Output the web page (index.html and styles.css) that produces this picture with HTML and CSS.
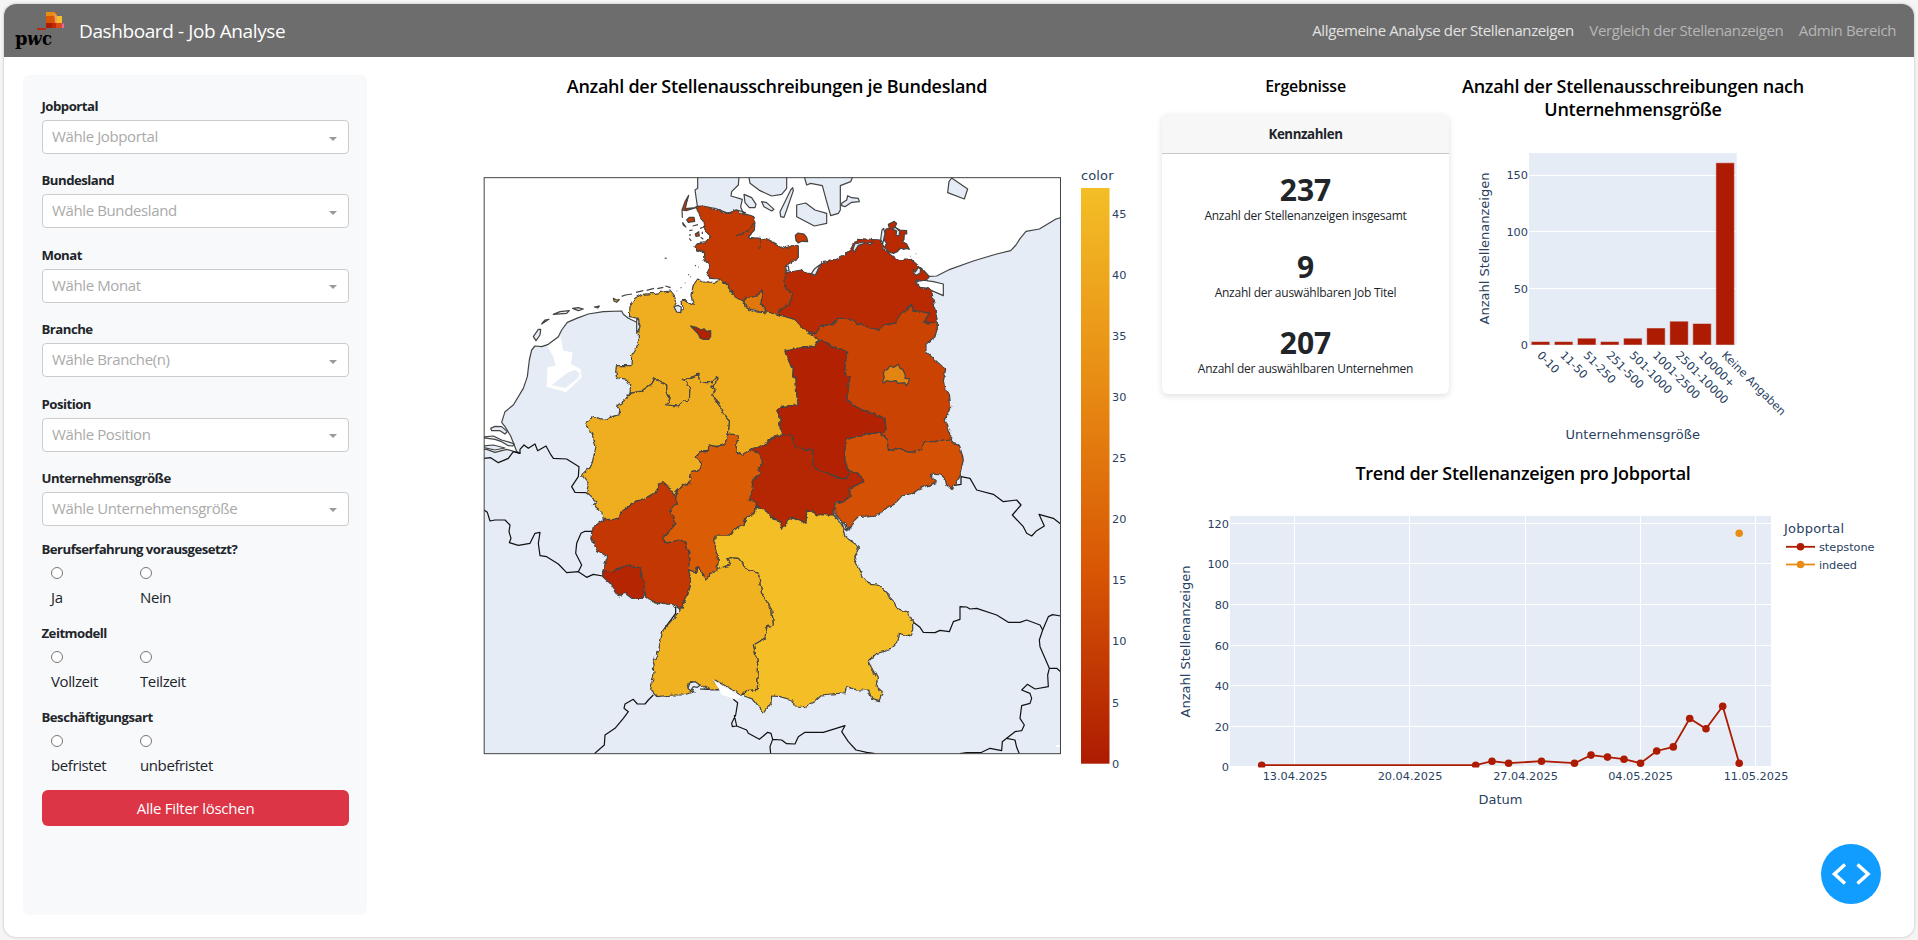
FILE: index.html
```html
<!DOCTYPE html>
<html lang="de">
<head>
<meta charset="utf-8">
<title>Dashboard - Job Analyse</title>
<link rel="stylesheet" href="styles.css">
</head>
<body>
<div class="app">
  <header class="navbar">
    <div class="brand">
      <svg class="logo" viewBox="12 8 56 46">
        <rect x="46" y="12" width="10" height="16" fill="#d85604"/>
        <path d="M46 12h8l3 3v1h-11z" fill="#e88d14"/>
        <path d="M54 13l3 3v7h-2z" fill="#eb9a6a"/>
        <rect x="57" y="16" width="5" height="8" fill="#f3be26"/>
        <rect x="46" y="23" width="10" height="5" fill="#ad1b02"/>
        <rect x="52" y="23" width="4" height="5" fill="#c52a05"/>
        <rect x="56" y="23" width="6" height="5" fill="#dc4a1c"/>
        <rect x="62" y="23.500" width="2" height="4.500" fill="#e669a2"/>
        <rect x="37" y="28" width="9" height="2" fill="#b82a14"/>
        <text class="logo-text" x="15" y="45" textLength="12.500" lengthAdjust="spacingAndGlyphs">p</text>
        <text class="logo-text logo-italic" x="27" y="45" textLength="14.500" lengthAdjust="spacingAndGlyphs">w</text>
        <text class="logo-text" x="42" y="45" textLength="10" lengthAdjust="spacingAndGlyphs">c</text>
      </svg>
      <span class="brand-name">Dashboard - Job Analyse</span>
    </div>
    <nav class="nav">
      <a class="nav-link active">Allgemeine Analyse der Stellenanzeigen</a>
      <a class="nav-link">Vergleich der Stellenanzeigen</a>
      <a class="nav-link">Admin Bereich</a>
    </nav>
  </header>
  <main class="main">
    <aside class="sidebar">
      <div class="field"><label class="label">Jobportal</label><div class="select"><span>Wähle Jobportal</span><i class="arrow"></i></div></div>
      <div class="field"><label class="label">Bundesland</label><div class="select"><span>Wähle Bundesland</span><i class="arrow"></i></div></div>
      <div class="field"><label class="label">Monat</label><div class="select"><span>Wähle Monat</span><i class="arrow"></i></div></div>
      <div class="field"><label class="label">Branche</label><div class="select"><span>Wähle Branche(n)</span><i class="arrow"></i></div></div>
      <div class="field"><label class="label">Position</label><div class="select"><span>Wähle Position</span><i class="arrow"></i></div></div>
      <div class="field"><label class="label">Unternehmensgröße</label><div class="select"><span>Wähle Unternehmensgröße</span><i class="arrow"></i></div></div>
      <div class="choice"><div class="label">Berufserfahrung vorausgesetzt?</div><div class="options"><label class="option"><i class="radio"></i>Ja</label><label class="option"><i class="radio"></i>Nein</label></div></div>
      <div class="choice"><div class="label">Zeitmodell</div><div class="options"><label class="option"><i class="radio"></i>Vollzeit</label><label class="option"><i class="radio"></i>Teilzeit</label></div></div>
      <div class="choice"><div class="label">Beschäftigungsart</div><div class="options"><label class="option"><i class="radio"></i>befristet</label><label class="option"><i class="radio"></i>unbefristet</label></div></div>
      <button class="reset">Alle Filter löschen</button>
    </aside>

    <section class="map-panel">
      <h2 class="title">Anzahl der Stellenausschreibungen je Bundesland</h2>
      <div class="map-row">
        <svg class="map" viewBox="0 0 1800 1860">
          <defs>
            <clipPath id="frame"><rect x="42" y="52" width="1730" height="1729"/></clipPath>
            <filter id="rough" filterUnits="userSpaceOnUse" x="0" y="0" width="1800" height="1860" color-interpolation-filters="sRGB">
              <feTurbulence type="fractalNoise" baseFrequency="0.065" numOctaves="2" seed="4" result="n"/>
              <feDisplacementMap in="SourceGraphic" in2="n" scale="13" xChannelSelector="R" yChannelSelector="G"/>
            </filter>
          </defs>
          <g clip-path="url(#frame)">
            <g class="land">
              <path d="M30 868L50 868 75 877 110 868 150 880 140 874 122 828 105 800 95 787 105 755 130 735 160 685 172 650 178 600 185 570 195 558 215 560 235 553 265 530 275 510 292 487 320 475 355 462 400 455 455 453 460 463 475 475 500 487 640 620 1200 450 1376 349 1400 348 1440 328 1510 303 1580 282 1622 272 1638 255 1650 236 1668 214 1708 207 1758 177 1790 168V1800H30z"/>
              <path d="M30 832L70 828 95 840 120 847 133 852 128 858 115 857 95 845 75 838zM30 860L75 870 105 864 70 855 40 858zM62 805L75 799 95 800 112 815 105 822 90 812 65 812z"/>
              <path d="M683 40V85L675 90 682 138 735 145 775 160 800 150 818 155 812 140 817 118 783 108 785 95 805 75 808 40z"/>
              <path d="M835 40L840 70 870 92 905 108 935 103 950 85V40z"/>
              <path d="M822 103L845 113 858 133 855 143 838 143 825 128zM875 125L890 128 912 148 905 153 882 140zM968 83L970 92 950 150 942 172 932 170 930 155 945 125 962 90z"/>
              <path d="M980 135L1007 129 1035 150 1070 160V190L1033 198 980 170zM1000 40L1010 75 1022 70 1057 77 1070 125 1082 167 1105 160 1111 150V77L1142 65 1152 40z"/>
              <path d="M1115 130L1130 120 1133 107 1145 113 1165 115 1168 125 1145 127 1125 140 1115 137zM1445 54L1493 87 1483 117 1433 98 1437 65z"/>
              <path d="M190 530L205 508 212 508 210 525 198 542zM215 492L225 480 237 478zM250 463L270 455 298 452 290 460zM308 445L325 443 340 447 325 452zM373 441L388 438 383 444z"/>
              <path class="water" d="M1335 368L1355 360 1390 365 1420 372V407L1385 392 1375 385 1350 382z"/>
            </g>
            <path class="lake" d="M232 558L272 530 280 572 308 577 303 612 332 627 335 652 288 697 230 680 232 622 257 617 250 590z"/>
            <path class="polder" d="M245 676L290 640 315 629 329 640 327 652 287 684z"/>
            <g class="border">
              <path d="M42 895L62 893 85 908 115 895 130 875 150 880 150 868 162 855 175 865 195 852 203 872 228 858 240 880 250 895 290 897 327 920 325 950 305 980 315 997 350 998"/>
              <path d="M42 1050L52 1057 60 1083 75 1080 105 1080 120 1095 117 1115 123 1135 118 1148 145 1156 180 1150 195 1120 210 1117 205 1150 210 1187 230 1190 265 1212 290 1238 325 1235 350 1252 370 1243 398 1248"/>
              <path d="M325 1235L335 1215 317 1180 320 1150 333 1120 345 1114 368 1114"/>
              <path d="M550 1605L535 1620 525 1632 502 1632 490 1618 465 1632 462 1645 475 1655 460 1675 435 1705 405 1725 403 1755 373 1781M617 1340V1360L580 1410"/>
              <path d="M690 1587L750 1590M790 1618L803 1628 797 1665 785 1690 787 1700 800 1698 793 1665M800 1698L830 1710 835 1720 868 1738 893 1717 903 1720 908 1738 900 1760 902 1781M908 1738L935 1740 950 1751 975 1752 985 1730 1005 1717 1060 1717 1125 1697 1115 1715 1135 1745 1158 1770 1190 1777 1215 1781"/>
              <path d="M1470 1781L1490 1778 1535 1777 1560 1765 1595 1772 1597 1745 1610 1735 1635 1715 1655 1712 1663 1695 1650 1675 1655 1637 1680 1630 1685 1615 1680 1600 1655 1590 1672 1573 1695 1587 1735 1580 1733 1545 1738 1525 1710 1460 1708 1440 1718 1410 1710 1395 1670 1380 1650 1387 1615 1387 1580 1365 1520 1345 1500 1347 1490 1341 1470 1340 1470 1378 1450 1385 1438 1415 1410 1411 1395 1418 1360 1417 1350 1402 1328 1385"/>
              <path d="M1718 1410L1735 1370 1748 1364 1772 1368M1738 1525L1760 1525 1772 1535M1610 1735L1635 1740 1640 1762 1648 1781"/>
              <path d="M1452 976L1473 973V950L1500 955 1520 990 1570 1003 1600 1025 1640 1020 1653 1035 1627 1065 1660 1100 1670 1120 1685 1128 1700 1112 1723 1098 1707 1063 1750 1075 1772 1092"/>
            </g>
            <g class="states" filter="url(#rough)">
              <path fill="#efad20" d="M478 470L480 440 495 415 515 403 555 400 600 393 612 408 620 425 612 440 625 456 640 445 632 425 645 418 655 428 670 436 663 405 670 375 683 357 700 366 735 367 755 360 775 378 790 405 822 425 825 440 850 455 885 458 895 455 930 465 975 478 995 500 1015 520 1045 537 1035 560 990 565 945 573 950 590 970 625 968 650 978 655 980 700 985 735 930 740 920 750 930 770 930 800 935 825 900 835 895 845 865 862 842 868 835 880 815 885 797 875 800 850 805 825 775 822 778 780 760 760 745 730 725 705 735 690 722 680 740 665 740 650 722 668 690 668 685 643 660 655 640 658 652 672 660 685 658 720 640 725 625 738 590 735 600 715 590 690 590 675 555 655 545 672 515 693 480 700 482 675 470 658 440 652 437 635 440 617 483 617 485 585 505 555 505 520 510 495 505 475z"/>
              <path fill="#efad20" d="M480 700L515 693 545 672 555 655 590 675 590 690 600 715 590 735 625 738 640 725 658 720 660 685 652 672 640 658 660 655 685 643 690 668 722 668 740 650 740 665 722 680 735 690 725 705 745 730 760 760 778 780 775 822 765 850 740 860 717 855 715 875 690 875 675 890 695 910 690 930 665 935 660 968 640 975 617 1000 615 1010 600 990 575 962 555 1000 520 1020 500 1022 455 1055 445 1078 400 1078 395 1055 370 1035 380 1025 350 1000 355 970 335 945 365 915 378 860 365 820 345 790 370 770 400 778 445 765 450 750 440 738 465 720z"/>
              <path fill="#c43a02" d="M678 140L700 138 735 148 775 160 800 150 820 160 847 168 855 185 853 210 835 232 870 235 895 240 940 265 975 255 985 258 985 295 950 315 945 330 965 345 945 360 948 385 968 400 962 430 930 450 930 465 895 457 885 450 872 430 878 392 862 405 830 412 820 425 795 410 780 385 765 365 745 357 722 355 710 335 718 320 705 300 703 278 680 270 675 260 685 248 710 245 722 232 705 215 703 190 688 165z"/>
              <path fill="none" d="M853 190L835 212 798 228M870 264L872 238"/>
              <path fill="#b92902" d="M945 340L965 335 995 330 1025 345 1035 345 1055 308 1095 300 1115 290 1140 270 1162 235 1230 240 1240 265 1280 300 1325 300 1360 330 1378 350 1370 360 1335 365 1350 382 1375 387 1385 392 1392 430 1402 485 1370 490 1362 485 1378 460 1330 450 1325 435 1295 460 1275 490 1240 495 1225 510 1160 490 1130 475 1105 475 1095 490 1050 500 1038 520 1015 520 995 500 975 478 930 465 930 450 962 430 968 400 948 385 945 360z"/>
              <path fill="#ca4303" d="M1015 520L1038 520 1050 500 1095 490 1105 475 1130 475 1160 490 1225 510 1240 495 1275 490 1295 460 1325 435 1330 450 1378 460 1362 485 1370 490 1402 485 1402 505 1395 530 1368 552 1368 575 1395 600 1427 628 1420 660 1425 690 1438 700 1442 740 1425 780 1442 820 1442 837 1395 845 1365 845 1355 868 1320 877 1275 865 1255 872 1250 835 1230 822 1248 810 1245 775 1210 760 1160 745 1130 715 1140 650 1123 640 1130 575 1090 560 1045 537z"/>
              <path fill="#b22102" d="M945 573L990 563 1030 563 1050 537 1090 560 1130 575 1123 640 1140 650 1130 715 1160 745 1210 760 1245 775 1248 810 1230 822 1195 820 1170 828 1130 838 1125 870 1125 900 1135 932 1130 958 1110 955 1060 935 1035 925 1027 910 1033 890 1025 870 975 865 965 825 935 825 930 800 930 770 920 750 930 740 985 735 980 700 978 655 968 650 970 625 950 590z"/>
              <path fill="#b52602" d="M935 825L965 825 975 865 1025 870 1033 890 1027 910 1035 925 1060 935 1110 955 1130 958 1135 932 1165 940 1182 965 1140 985 1140 1010 1120 1025 1095 1030 1090 1065 1040 1065 1025 1050 1010 1055 1008 1093 995 1085 960 1073 945 1100 935 1105 930 1082 910 1078 890 1055 860 1040 835 1020 850 985 845 960 870 945 865 920 878 910 865 880 842 868 865 862 895 845 900 835z"/>
              <path fill="#d45004" d="M1125 900L1125 870 1130 838 1170 828 1195 820 1230 820 1250 835 1255 872 1275 865 1320 877 1355 868 1365 845 1395 845 1440 837 1450 848 1468 853 1480 900 1470 940 1458 970 1445 988 1430 975 1425 955 1412 945 1385 942 1385 955 1398 968 1350 985 1330 1000 1295 1008 1280 1025 1255 1040 1222 1065 1165 1070 1145 1090 1138 1110 1125 1090 1095 1065 1093 1035 1120 1025 1140 1010 1140 985 1182 965 1165 940 1135 932 1130 915z"/>
              <path fill="#f4be26" d="M860 1040L890 1055 910 1078 930 1082 935 1105 945 1100 960 1073 995 1085 1008 1093 1010 1055 1025 1050 1040 1065 1090 1065 1115 1090 1125 1130 1168 1160 1152 1195 1180 1250 1200 1273 1225 1275 1270 1320 1280 1345 1310 1355 1328 1385 1328 1410 1318 1428 1285 1420 1280 1450 1260 1470 1220 1480 1195 1505 1222 1555 1218 1578 1237 1595 1228 1622 1205 1615 1195 1590 1160 1590 1130 1580 1125 1598 1055 1605 1035 1625 1005 1640 975 1638 965 1620 930 1610 905 1608 903 1630 880 1660 870 1645 850 1618 815 1605 830 1592 862 1588 865 1520 850 1455 885 1435 890 1400 910 1395 905 1350 875 1300 865 1240 830 1225 805 1195 770 1193 780 1215 755 1222 742 1225 745 1190 733 1160 735 1128 780 1128 790 1110 820 1095 830 1068 855 1060z"/>
              <path fill="#f0b221" d="M742 1225L755 1222 780 1215 770 1193 805 1195 830 1225 865 1240 875 1300 905 1350 910 1395 890 1400 885 1435 850 1455 865 1520 862 1588 830 1592 815 1605 735 1560 750 1588 720 1590 690 1575 665 1565 652 1580 660 1590 675 1595 640 1605 610 1605 560 1610 542 1590 552 1540 548 1510 565 1475 578 1412 610 1375 635 1345 655 1300 663 1265 655 1228 675 1240 682 1220 700 1243 708 1260 720 1240z"/>
              <path fill="#da5c05" d="M775 822L805 825 800 850 797 875 815 885 842 868 865 880 878 910 865 920 870 945 845 960 850 985 835 1020 860 1025 855 1060 830 1068 820 1095 790 1110 780 1128 735 1128 733 1160 745 1190 740 1235 720 1240 708 1260 700 1243 682 1220 675 1240 655 1228 660 1195 648 1150 625 1140 590 1150 577 1135 605 1105 618 1090 603 1060 605 1040 622 1030 617 1000 640 975 660 968 665 935 690 930 695 910 675 890 690 875 715 875 717 855 740 860 765 850z"/>
              <path fill="#c23702" d="M575 962L590 975 615 1010 622 1030 605 1040 603 1060 618 1090 605 1105 577 1135 590 1150 625 1140 648 1150 660 1195 655 1228 663 1265 650 1310 632 1345 610 1335 550 1325 525 1308 520 1290 525 1270 512 1250 512 1225 480 1215 430 1235 398 1235 413 1190 380 1170 363 1130 370 1100 400 1080 445 1078 455 1055 500 1022 520 1020 555 1000z"/>
              <path fill="#b62502" d="M398 1235L430 1235 480 1215 512 1225 512 1250 525 1270 520 1290 520 1315 485 1315 465 1300 445 1308 420 1270 398 1250z"/>
              <path fill="#e1780c" d="M822 425L830 412 862 405 875 392 878 405 872 430 888 452 880 458 850 450 828 443z"/>
            </g>
            <g class="states">
              <path fill="#c43a02" d="M976 226L984 219 1002 222 1010 232 1013 245 995 244 985 249 978 242zM656 106L650 128 646 146 678 143 648 152 636 150 637 172 636 150 645 125zM650 180L658 172 672 172 674 184 655 187zM638 188L648 201 640 195zM676 222L686 215 688 228 678 229z"/>
              <path fill="none" d="M658 212L668 210M658 235L664 243M660 222V228M690 205L698 202M668 198L684 194M692 232L700 238M697 215V222"/>
              <path fill="#b92902" d="M1242 225L1248 207 1258 205 1255 193 1273 184 1280 190 1275 202 1290 210 1310 212 1310 222 1303 222 1302 238 1298 245 1310 252 1318 268 1310 265 1300 268 1292 264 1282 275 1270 280 1256 276 1243 262 1250 250 1242 240z"/>
              <path fill="#e5ecf6" d="M1149 268L1154 252 1180 246 1186 249 1165 256 1152 277zM1192 249L1210 246 1200 254zM1265 206L1276 202 1289 214 1287 228 1278 226 1280 213zM1330 328L1336 336 1345 322 1352 328 1350 340 1338 346 1332 340zM1236 210L1241 205 1245 220 1238 252 1232 238zM1024 341L1034 326 1050 314 1045 326 1036 346zM946 320L955 318 957 332 950 333zM612 440L624 436 634 442 632 458 620 456zM500 478L507 480 506 492 510 500 504 512 500 520zM654 1585L660 1568 676 1565 690 1576 682 1582 670 1580 662 1592zM1116 1090L1124 1092 1130 1112 1122 1106z"/>
              <path fill="#b22202" d="M662 498L678 502 694 510 702 506 710 514 722 512 722 530 716 538 700 538 690 534 685 522z"/>
              <path fill="#e38512" d="M1240 640L1244 630 1252 629 1260 618 1272 622 1285 613 1290 625 1298 628 1306 645 1305 655 1318 656 1316 666 1309 677 1304 668 1284 670 1278 662 1262 665 1250 662 1240 669 1238 664 1243 652z"/>
              <path fill="#efad20" d="M430 415L440 420 448 419 440 427 432 423zM455 409L466 405 486 402M498 397L520 392M530 391L552 385M562 386L580 382M586 378L602 383"/>
              <path fill="none" d="M584 294L590 295M675 316L678 318M685 321L687 322M655 343L657 345M661 350L663 351M645 368L646 370M632 382L634 384M620 392L621 394M1321 288L1322 289M1338 281L1339 282"/>
            </g>
            <path class="lake" d="M728 1558L750 1572 815 1612 800 1618 755 1605 745 1585z"/>
            <path class="mark" d="M1757 1758H1772"/>
          </g>
          <rect class="map-frame" x="42.500" y="53" width="1729" height="1728"/>
        </svg>
        <svg class="colorbar" viewBox="1070 160 80 620">
          <defs><linearGradient id="scale" x1="0" y1="1" x2="0" y2="0"><stop offset="0" stop-color="#ad1b02"/><stop offset=".3333" stop-color="#d85604"/><stop offset=".6667" stop-color="#e88d14"/><stop offset="1" stop-color="#f3be26"/></linearGradient></defs>
          <rect x="1081" y="188" width="28.500" height="575.700" fill="url(#scale)"/>
          <text class="axis-title" x="1081" y="180" textLength="32.500">color</text>
          <g class="tick">
            <text x="1112" y="217.500">45</text><text x="1112" y="278.500">40</text><text x="1112" y="339.500">35</text><text x="1112" y="400.500">30</text><text x="1112" y="461.500">25</text><text x="1112" y="523">20</text><text x="1112" y="584">15</text><text x="1112" y="645">10</text><text x="1112" y="707">5</text><text x="1112" y="768">0</text>
          </g>
        </svg>
      </div>
    </section>

    <section class="right">
      <div class="top-row">
        <div class="results">
          <h3 class="subtitle">Ergebnisse</h3>
          <div class="card">
            <div class="card-head">Kennzahlen</div>
            <div class="kpi"><b>237</b><span>Anzahl der Stellenanzeigen insgesamt</span></div>
            <div class="kpi"><b>9</b><span>Anzahl der auswählbaren Job Titel</span></div>
            <div class="kpi"><b>207</b><span>Anzahl der auswählbaren Unternehmen</span></div>
          </div>
        </div>
        <div class="sizes">
          <h2 class="title">Anzahl der Stellenausschreibungen nach<br>Unternehmensgröße</h2>
          <svg class="bar-chart" viewBox="1449 140 368 310">
            <rect x="1529" y="153" width="207.700" height="192" fill="#e5ecf6"/>
            <path class="grid" d="M1529 175.500H1736.700M1529 231.500H1736.700M1529 288.500H1736.700"/>
            <g class="bars">
              <rect x="1531.300" y="341.600" width="18.460" height="3.400"/><rect x="1554.400" y="341.600" width="18.460" height="3.400"/><rect x="1577.500" y="338.200" width="18.460" height="6.800"/><rect x="1600.500" y="341.600" width="18.460" height="3.400"/><rect x="1623.600" y="338.200" width="18.460" height="6.800"/><rect x="1646.700" y="328" width="18.460" height="17"/><rect x="1669.800" y="321.200" width="18.460" height="23.800"/><rect x="1692.800" y="323.500" width="18.460" height="21.500"/><rect x="1715.900" y="162.800" width="18.460" height="182.200"/>
            </g>
            <g class="tick end"><text x="1528" y="179.300">150</text><text x="1528" y="236">100</text><text x="1528" y="292.500">50</text><text x="1528" y="349.300">0</text></g>
            <g class="tick">
              <text transform="translate(1536.500 356) rotate(45)">0-10</text>
              <text transform="translate(1559.600 356) rotate(45)">11-50</text>
              <text transform="translate(1582.700 356) rotate(45)">51-250</text>
              <text transform="translate(1605.700 356) rotate(45)">251-500</text>
              <text transform="translate(1628.800 356) rotate(45)">501-1000</text>
              <text transform="translate(1651.900 356) rotate(45)">1001-2500</text>
              <text transform="translate(1675 356) rotate(45)">2501-10000</text>
              <text transform="translate(1698 356) rotate(45)">10000+</text>
              <text transform="translate(1721.100 356) rotate(45)">Keine Angaben</text>
            </g>
            <text class="axis-title" x="1565.500" y="439" textLength="134.500">Unternehmensgröße</text>
            <text class="axis-title" transform="translate(1488.500 324.500) rotate(-90)" textLength="152">Anzahl Stellenanzeigen</text>
          </svg>
        </div>
      </div>
      <div class="trend">
        <h2 class="title">Trend der Stellenanzeigen pro Jobportal</h2>
        <svg class="line-chart" viewBox="1162 500 738 320">
          <defs><clipPath id="plot"><rect x="1230" y="516" width="541" height="251.500"/></clipPath></defs>
          <rect x="1230" y="516" width="541" height="250" fill="#e5ecf6"/>
          <path class="grid" d="M1230 523.500H1771M1230 563.500H1771M1230 604.500H1771M1230 645.500H1771M1230 685.500H1771M1230 726.500H1771M1294.500 516V766M1409.500 516V766M1525.500 516V766M1640.500 516V766M1755.500 516V766"/>
          <g clip-path="url(#plot)" class="series">
            <path class="series-line" d="M1261.700 765.200L1475.700 765.200 1492 761.200 1508.600 763.200 1541.500 761.200 1574.500 763.200 1591 755.100 1607.500 757.100 1624 759.200 1640.500 763.200 1656.700 751 1673.300 746.900 1689.700 718.500 1706 728.700 1722.700 706.300 1739.200 763.200"/>
            <circle cx="1261.700" cy="765.200" r="3.800"/><circle cx="1475.700" cy="765.200" r="3.800"/><circle cx="1492" cy="761.200" r="3.800"/><circle cx="1508.600" cy="763.200" r="3.800"/><circle cx="1541.500" cy="761.200" r="3.800"/><circle cx="1574.500" cy="763.200" r="3.800"/><circle cx="1591" cy="755.100" r="3.800"/><circle cx="1607.500" cy="757.100" r="3.800"/><circle cx="1624" cy="759.200" r="3.800"/><circle cx="1640.500" cy="763.200" r="3.800"/><circle cx="1656.700" cy="751" r="3.800"/><circle cx="1673.300" cy="746.900" r="3.800"/><circle cx="1689.700" cy="718.500" r="3.800"/><circle cx="1706" cy="728.700" r="3.800"/><circle cx="1722.700" cy="706.300" r="3.800"/><circle cx="1739.200" cy="763.200" r="3.800"/>
            <circle class="indeed" cx="1739.200" cy="533.300" r="3.800"/>
          </g>
          <g class="tick end"><text x="1229" y="527.500">120</text><text x="1229" y="568">100</text><text x="1229" y="609">80</text><text x="1229" y="649.500">60</text><text x="1229" y="690">40</text><text x="1229" y="731">20</text><text x="1229" y="771.300">0</text></g>
          <g class="tick mid"><text x="1295" y="780">13.04.2025</text><text x="1410" y="780">20.04.2025</text><text x="1525.500" y="780">27.04.2025</text><text x="1640.500" y="780">04.05.2025</text><text x="1756" y="780">11.05.2025</text></g>
          <text class="axis-title" x="1478.500" y="804" textLength="44">Datum</text>
          <text class="axis-title" transform="translate(1189.500 717.500) rotate(-90)" textLength="152">Anzahl Stellenanzeigen</text>
          <text class="axis-title" x="1784" y="533" textLength="60">Jobportal</text>
          <g class="series"><path class="series-line" d="M1786 546.800H1815"/><circle cx="1800.500" cy="546.800" r="3.800"/></g>
          <g class="series indeed"><path class="series-line" d="M1786 564.500H1815"/><circle cx="1800.500" cy="564.500" r="3.800"/></g>
          <g class="tick"><text x="1819" y="551" textLength="55.500">stepstone</text><text x="1819" y="569" textLength="38">indeed</text></g>
        </svg>
      </div>
    </section>
  </main>
</div>
<div class="dev-button"><svg viewBox="0 0 60 60"><path d="M24 20.500L13.500 30 24 39.500M36.500 20.500L47 30 36.500 39.500"/></svg></div>
</body>
</html>
```

FILE: styles.css
```css
* { box-sizing: border-box; }
body { margin: 0; height: 940px; padding: 4px 4px 3px; overflow: hidden; background: #f5f5f5; font-family: "Open Sans", "Noto Sans", sans-serif; color: #212529; }
.app { width: 1910px; height: 933px; border-radius: 12px; overflow: hidden; background: #fff; box-shadow: 0 0 3px rgba(0,0,0,.25); }
.navbar { height: 53px; background: #6d6d6d; display: flex; align-items: center; justify-content: space-between; padding: 0 18px 0 8px; }
.brand { display: flex; align-items: center; gap: 11px; }
.logo { width: 56px; height: 46px; }
.logo-text { font: bold 18px "DejaVu Serif", serif; fill: #000; }
.logo-italic { font-style: italic; }
.brand-name { color: #fff; font-size: 19px; letter-spacing: -0.4px; line-height: 26px; }
.nav { display: flex; gap: 15.500px; margin-bottom: 2px; }
.nav-link { color: #b6b6b6; font-size: 15px; letter-spacing: -0.39px; white-space: nowrap; }
.nav-link.active { color: #e2e2e2; }
.main { display: flex; padding: 18px 14px 0 19px; }
.sidebar { width: 344px; height: 840px; background: #f8f9fb; border-radius: 6px; padding: 21px 18px 0 19px; margin-right: 37px; flex: none; }
.label { display: block; font-weight: 700; font-size: 13.200px; letter-spacing: -0.52px; line-height: 20px; white-space: nowrap; margin-left: -0.500px; }
.field { height: 74.400px; }
.select { margin-top: 4px; height: 34px; border: 1px solid #ccc; border-radius: 4px; background: #fff; display: flex; align-items: center; justify-content: space-between; padding: 0 11px 2px 9px; color: #aaa; font-size: 15px; letter-spacing: -0.38px; }
.arrow { border: 4px solid transparent; border-top-color: #999; border-bottom: 0; margin-top: 5px; }
.choice { height: 83.700px; margin-top: -3px; margin-bottom: 3px; }
.options { display: flex; padding-left: 9px; }
.option { width: 89px; display: flex; flex-direction: column; font-size: 15px; letter-spacing: -0.4px; line-height: 22px; }
.radio { width: 12px; height: 12px; border: 1px solid #767676; border-radius: 50%; background: #fff; margin: 8px 0 7px; }
.reset { display: block; width: 307px; height: 36px; border: 0; border-radius: 6px; background: #dc3545; color: #fff; font: 15px "Open Sans", sans-serif; letter-spacing: -0.25px; margin-top: -3.500px; }
.title { margin: 0; font-size: 18px; font-weight: 600; letter-spacing: -0.28px; line-height: 23px; text-align: center; color: #000; white-space: nowrap; }
.map-panel { width: 746px; flex: none; }
.map-row { display: flex; padding: 62px 0 0 66px; }
.map { width: 600px; height: 620px; }
.colorbar { width: 80px; height: 620px; }
.land path { fill: #e5ecf6; stroke: #444; stroke-width: 3.600; stroke-linejoin: round; }
.land .water { fill: #fff; }
.lake { fill: #fff; }
.polder { fill: #e5ecf6; }
.border path { fill: none; stroke: #111; stroke-width: 3.600; stroke-linejoin: round; }
.states path { stroke: #444; stroke-width: 3.600; stroke-linejoin: round; }
.mark { stroke: #fff; stroke-width: 6; }
.map-frame { fill: none; stroke: #444; stroke-width: 3; }
.right { margin-left: 12px; width: 738px; flex: none; }
.top-row { display: flex; height: 387px; }
.results { width: 287px; }
.subtitle { margin: 0; font-size: 15.900px; font-weight: 600; letter-spacing: -0.2px; line-height: 23px; text-align: center; color: #000; }
.card { margin-top: 16px; height: 280px; border-radius: 6px; background: #fff; box-shadow: 0 2px 6px rgba(0,0,0,.13); }
.card-head { height: 40px; background: #f7f7f7; border-bottom: 1px solid #c8c8c8; border-radius: 6px 6px 0 0; text-align: center; font-weight: 700; font-size: 13.300px; letter-spacing: -0.4px; line-height: 40px; margin-bottom: 16px; }
.kpi { display: flex; flex-direction: column; align-items: center; height: 76.700px; }
.kpi b { font-size: 30px; line-height: 40px; }
.kpi span { font-size: 12px; line-height: 11px; letter-spacing: -0.24px; }
.sizes { width: 368px; }
.bar-chart { display: block; width: 368px; height: 310px; margin-top: 19px; overflow: visible; }
.trend .title { width: 722px; }
.line-chart { display: block; width: 738px; height: 320px; margin-top: 15px; }
.axis-title { font: 13px "DejaVu Sans", sans-serif; fill: #2a3f5f; }
.tick text { font: 11.300px "DejaVu Sans", sans-serif; fill: #2a3f5f; }
.end text { text-anchor: end; }
.mid text { text-anchor: middle; }
.grid { fill: none; stroke: #fff; stroke-width: 1; }
.bars rect { fill: #ad1b02; stroke: #e5ecf6; stroke-opacity: .5; stroke-width: 1; }
.series circle { fill: #ad1b02; }
.series-line { fill: none; stroke: #ad1b02; stroke-width: 1.800; }
.series circle.indeed, .series.indeed circle { fill: #e88d14; }
.series.indeed .series-line { stroke: #e88d14; }
.dev-button { position: absolute; left: 1821px; top: 844px; width: 60px; height: 60px; border-radius: 50%; background: #119dff; }
.dev-button svg { display: block; width: 60px; height: 60px; }
.dev-button path { fill: none; stroke: #fff; stroke-width: 3.500; }
```
